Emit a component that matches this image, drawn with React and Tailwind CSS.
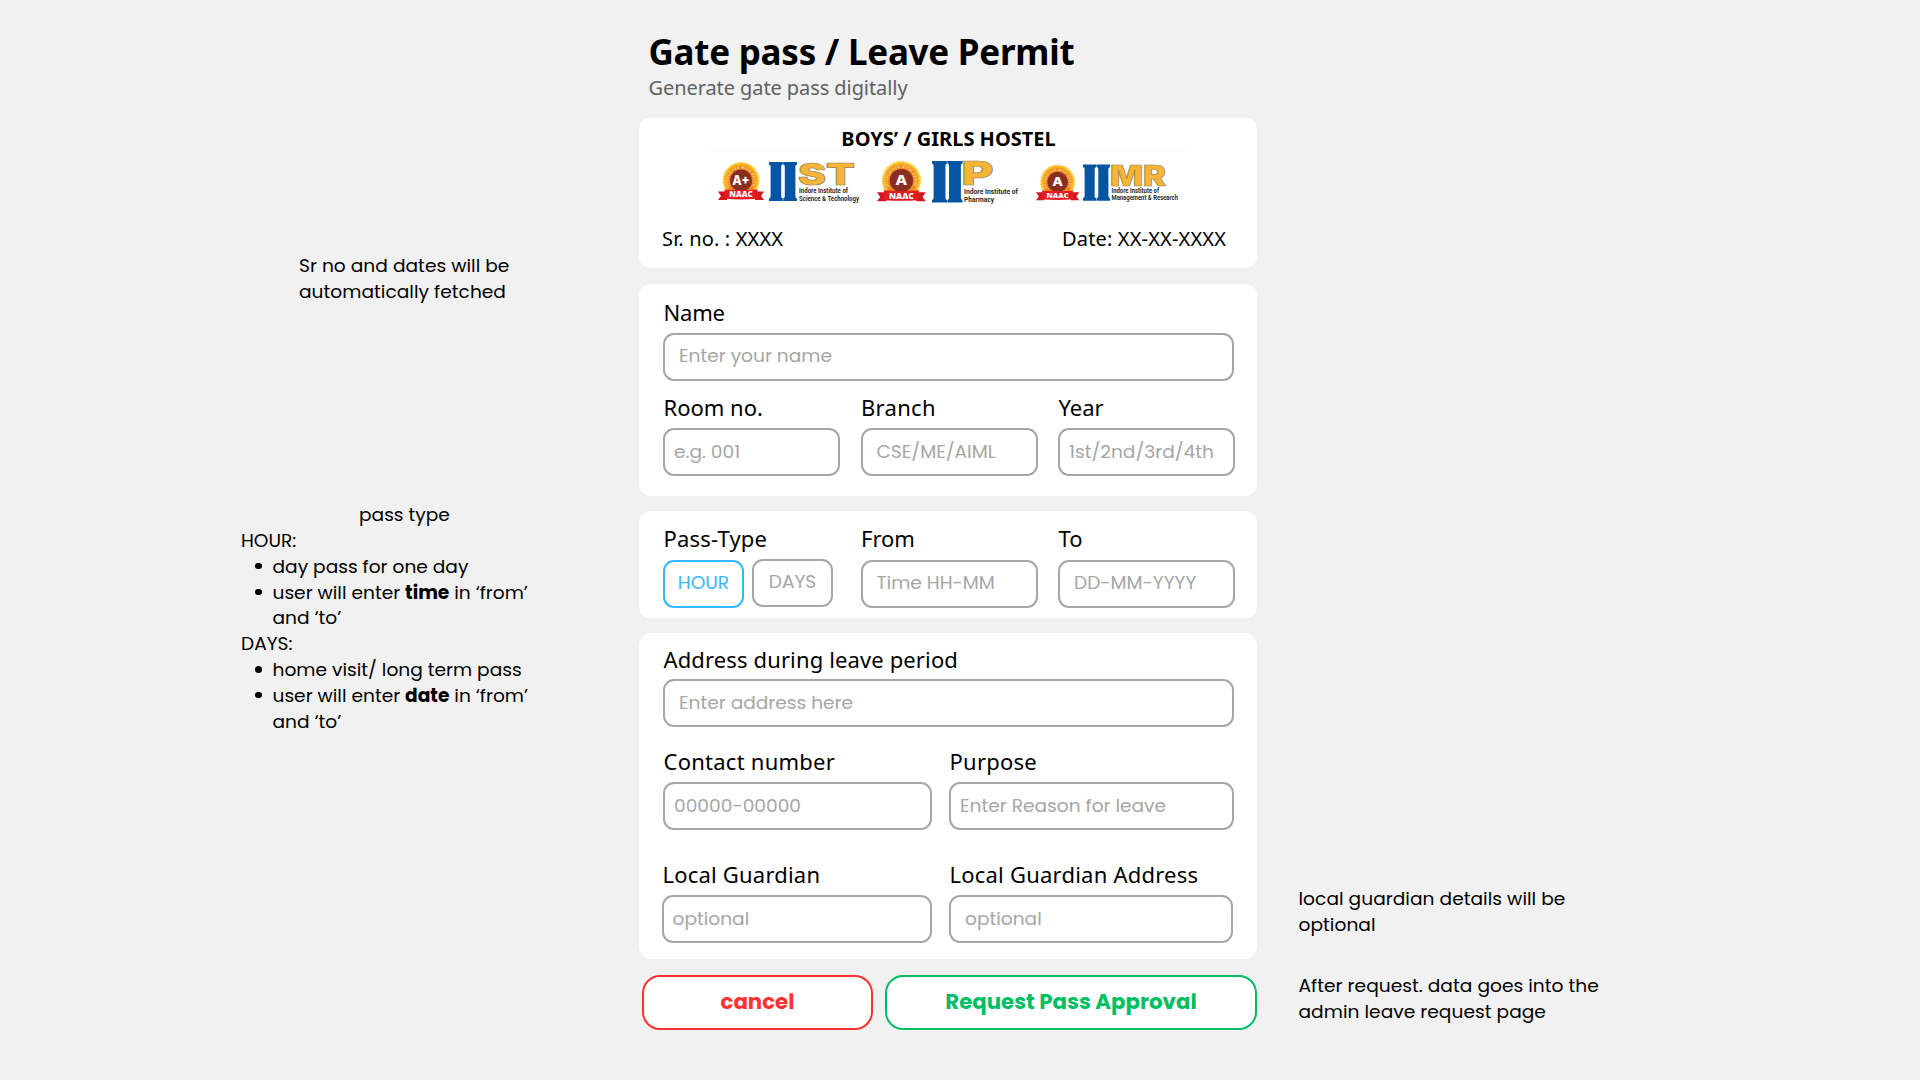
const POP = "font-['Poppins','Noto_Sans',sans-serif]";

function Naac({ x, y, s, grade, gradeWidth, id }) {
  return (
    <g transform={`translate(${x} ${y}) scale(${s})`}>
      <circle cx="23" cy="18.5" r="17.2" fill="#f9b01c" />
      <circle cx="23" cy="18.5" r="17.4" fill="none" stroke="#fdc419" strokeWidth="2.2" strokeDasharray="1.5 0.8" />
      <circle cx="23" cy="18.5" r="15" fill="#f08a22" />
      <circle cx="23" cy="18.5" r="11" fill="#8c2d22" />
      <path id={id} d="M11.6 24.5 A12.6 12.6 0 1 1 34.4 24.5" fill="none" />
      <text className="font-['Roboto',sans-serif] font-bold" fontSize="3.1" fill="#ffe3a3">
        <textPath href={`#${id}`} textLength="49">ACCREDITED WITH GRADE</textPath>
      </text>
      <path d="M0 29.5 H9 V38 H0 L3 34 Z M46 29.5 H37 V38 H46 L43 34 Z" fill="#d3171f" />
      <path d="M6.5 27.6 Q23 28.8 39.5 27.6 V36.8 Q23 38.4 6.5 36.8 Z" fill="#e51b24" />
      <text x="23" y="23" textAnchor="middle" textLength={gradeWidth} lengthAdjust="spacingAndGlyphs" className="font-['Inter',sans-serif] font-extrabold" fontSize="13" fill="#fff">{grade}</text>
      <text x="23" y="35.4" textAnchor="middle" textLength="23.5" lengthAdjust="spacingAndGlyphs" className="font-['Open_Sans',sans-serif] font-extrabold" fontSize="7.8" fill="#fff">NAAC</text>
    </g>
  );
}

function Pillars({ x, y, w, h }) {
  const p = w / 2;
  const one = (o) =>
    `M${o} ${y} h${p - 0.2} v2.6 q-1.6 .5 -1.6 2 v${h - 9.2} q0 1.5 1.6 2 v2.6 h${-(p - 0.2)} v-2.6 q1.6 -.5 1.6 -2 v${-(h - 9.2)} q0 -1.5 -1.6 -2 Z`;
  return <path d={`${one(x)} ${one(x + p + 0.2)}`} fill="#0455a4" />;
}

function Initials({ x, y, size, w, children }) {
  return (
    <text x={x} y={y} textLength={w} lengthAdjust="spacingAndGlyphs" fontSize={size} fill="#f7b538" stroke="#9a8656" strokeWidth="0.7" className="font-['Inter',sans-serif] font-black">
      {children}
    </text>
  );
}

function Caption({ x, y, w, children }) {
  return (
    <text x={x} y={y} textLength={w} lengthAdjust="spacingAndGlyphs" fontSize="7.1" fill="#2b2b2b" className="font-['Roboto',sans-serif] font-bold">
      {children}
    </text>
  );
}

function Logos() {
  return (
    <svg width="518" height="60" viewBox="689 150 518 60" className="block">
      <path d="M709 150.5 H1187" stroke="#f8f8f8" />
      <Naac x={718} y={162} s={1} grade="A+" gradeWidth={17.5} id="ring-iist" />
      <Pillars x={769} y={162} w={28} h={39} />
      <Initials x={798} y={184.5} size={29.5} w={57}>ST</Initials>
      <Caption x={799} y={193.4} w={49}>Indore Institute of</Caption>
      <Caption x={799} y={200.8} w={60}>Science &amp; Technology</Caption>

      <Naac x={877} y={161} s={1.06} grade="A" gradeWidth={11.5} id="ring-iip" />
      <Pillars x={932} y={161} w={30.5} h={41.5} />
      <Initials x={961.5} y={185.4} size={33} w={32}>P</Initials>
      <Caption x={964} y={194.2} w={54}>Indore Institute of</Caption>
      <Caption x={964} y={201.8} w={30}>Pharmacy</Caption>

      <Naac x={1036} y={164.6} s={0.94} grade="A" gradeWidth={11.5} id="ring-iimr" />
      <Pillars x={1083} y={164.4} w={27} h={36.4} />
      <Initials x={1110} y={185.8} size={28.5} w={56}>MR</Initials>
      <Caption x={1111.5} y={193} w={47.5}>Indore Institute of</Caption>
      <Caption x={1111.5} y={200.2} w={66.5}>Management &amp; Research</Caption>
    </svg>
  );
}

function Label({ children, className = "" }) {
  return <label className={`block whitespace-nowrap pl-[0.5px] text-[22px] leading-[28px] ${className}`}>{children}</label>;
}

function Field({ children, className = "" }) {
  return (
    <div className={`flex h-12 items-center whitespace-nowrap rounded-[11px] border-2 border-[#a6a6a6] text-[18.6px] text-[#a6a6a6] ${POP} ${className}`}>
      {children}
    </div>
  );
}

function Card({ children, className = "" }) {
  return <section className={`rounded-xl bg-white ${className}`}>{children}</section>;
}

export default function App() {
  return (
    <div className="flex h-[1080px] w-[1920px] overflow-hidden bg-[#f1f1f1] font-['Noto_Sans',sans-serif] text-black">
      <aside className={`w-[639px] shrink-0 pl-[241px] pt-[253px] text-[18.6px] leading-[25.85px] ${POP}`}>
        <p className="ml-[58px] w-[230px] leading-[26.2px] tracking-[0.03px]">Sr no and dates will be automatically fetched</p>
        <div className="mt-[196.6px] w-[328px]">
          <p className="ml-[118px]">pass type</p>
          <p>HOUR:</p>
          <ul>
            <Bullet>day pass for one day</Bullet>
            <Bullet>user will enter <b>time</b> in ‘from’<br />and ‘to’</Bullet>
          </ul>
          <p>DAYS:</p>
          <ul>
            <Bullet>home visit/ long term pass</Bullet>
            <Bullet>user will enter <b>date</b> in ‘from’<br />and ‘to’</Bullet>
          </ul>
        </div>
      </aside>

      <main className="w-[618px] shrink-0 pt-[30px]">
        <header className="h-[88px] pl-[9.5px]">
          <h1 className="whitespace-nowrap text-[35px] font-bold leading-[44px] tracking-[-0.25px]">Gate pass / Leave Permit</h1>
          <p className="text-[20px] leading-[27px] tracking-[-0.08px] text-[#606060]">Generate gate pass digitally</p>
        </header>

        <Card className="flex h-[150px] flex-col items-center pt-[9px]">
          <h2 className="-mb-px pl-px text-[20px] font-bold leading-6">BOYS’ / GIRLS HOSTEL</h2>
          <Logos />
          <div className="mt-4 flex w-full justify-between pl-[23px] pr-[31px] text-[20px] leading-[26px]">
            <span className="tracking-[0.15px]">Sr. no. : XXXX</span>
            <span className="tracking-[0.15px]">Date: XX-XX-XXXX</span>
          </div>
        </Card>

        <Card className="mt-4 h-[212px] pl-6 pr-[23px] pt-[14px]">
          <Label className="tracking-[-0.2px]">Name</Label>
          <Field className="mt-[7px] pb-[3px] pl-[14px]">Enter your name</Field>
          <div className="mt-3 grid grid-cols-[177px_177px_177px] gap-x-[20.5px]">
            <div>
              <Label>Room no.</Label>
              <Field className="mt-[7px] pb-px pl-[9px]">e.g. 001</Field>
            </div>
            <div>
              <Label className="tracking-[0.3px]">Branch</Label>
              <Field className="mt-[7px] pb-px pl-[14px]">CSE/ME/AIML</Field>
            </div>
            <div>
              <Label>Year</Label>
              <Field className="mt-[7px] pb-px pl-[9px]">1st/2nd/3rd/4th</Field>
            </div>
          </div>
        </Card>

        <Card className="mt-[15px] h-[107px] pl-6 pr-[23px] pt-[13px]">
          <div className="grid grid-cols-[177px_177px_177px] gap-x-[20.5px]">
            <div>
              <Label className="tracking-[0.2px]">Pass-Type</Label>
              <div className="mt-[7px] flex gap-2">
                <button className={`mt-px flex h-12 w-[81px] items-center justify-center rounded-[11px] border-2 border-[#38b6ff] pb-[3px] text-[18.6px] text-[#38b6ff] ${POP}`}>HOUR</button>
                <button className={`flex h-12 w-[81px] items-center justify-center rounded-[11px] border-2 border-[#a6a6a6] pb-[3px] text-[18.6px] text-[#a6a6a6] ${POP}`}>DAYS</button>
              </div>
            </div>
            <div>
              <Label>From</Label>
              <Field className="mt-2 pb-[3px] pl-[14px]">Time HH-MM</Field>
            </div>
            <div>
              <Label>To</Label>
              <Field className="mt-2 pb-[3px] pl-[14px]">DD-MM-YYYY</Field>
            </div>
          </div>
        </Card>

        <Card className="mt-[15px] h-[326px] px-[23px] pt-3">
          <div className="ml-px">
            <Label className="tracking-[0.13px]">Address during leave period</Label>
            <Field className="mt-1.5 pb-px pl-[14px]">Enter address here</Field>
          </div>
          <div className="ml-px mt-5 flex gap-[17px]">
            <div className="w-[269px]">
              <Label className="tracking-[0.25px]">Contact number</Label>
              <Field className="mt-[7px] pb-px pl-[9px]">00000-00000</Field>
            </div>
            <div className="flex-1">
              <Label className="tracking-[0.25px]">Purpose</Label>
              <Field className="mt-[7px] pb-px pl-[9px]">Enter Reason for leave</Field>
            </div>
          </div>
          <div className="mt-[30px] flex gap-[17px] pr-px">
            <div className="w-[270px]">
              <Label className="tracking-[0.2px]">Local Guardian</Label>
              <Field className="mt-[7px] pb-px pl-[8.5px]">optional</Field>
            </div>
            <div className="flex-1">
              <Label className="tracking-[0.22px]">Local Guardian Address</Label>
              <Field className="mt-[7px] pb-px pl-[14px]">optional</Field>
            </div>
          </div>
        </Card>

        <div className={`mt-4 flex gap-3 pl-[3px] text-[21.3px] font-bold ${POP}`}>
          <button className="h-[55px] w-[231px] rounded-[18px] border-2 border-[#ff3131] bg-white pb-[2px] text-[#ff3131]">cancel</button>
          <button className="h-[55px] flex-1 rounded-[18px] border-2 border-[#00bf63] bg-white pb-[2px] text-[#00bf63]">Request Pass Approval</button>
        </div>
      </main>

      <aside className={`pl-[41.5px] pt-[886px] text-[18.6px] leading-[26.2px] tracking-[0.04px] ${POP}`}>
        <p>local guardian details will be<br />optional</p>
        <p className="mt-[34.6px]">After request. data goes into the<br />admin leave request page</p>
      </aside>
    </div>
  );
}

function Bullet({ children }) {
  return (
    <li className="flex whitespace-nowrap">
      <span className="ml-[14px] mr-[11px] mt-[9px] size-[6.5px] shrink-0 rounded-full bg-black" />
      <span>{children}</span>
    </li>
  );
}
